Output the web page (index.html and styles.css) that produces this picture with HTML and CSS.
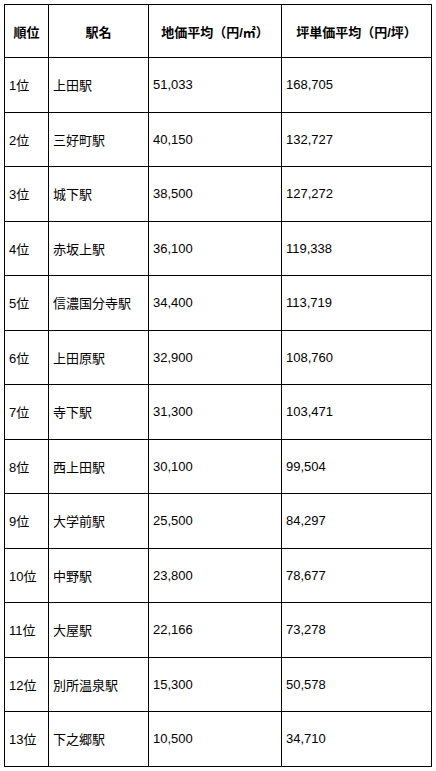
FILE: index.html
```html
<!DOCTYPE html>
<html lang="ja">
<head>
<meta charset="utf-8">
<link rel="stylesheet" href="styles.css">
</head>
<body>
<table class="rank">
  <colgroup>
    <col class="c1"><col class="c2"><col class="c3"><col class="c4">
  </colgroup>
  <thead>
    <tr class="head"><th>順位</th><th>駅名</th><th>地価平均（円/㎡）</th><th>坪単価平均（円/坪）</th></tr>
  </thead>
  <tbody>
    <tr><td>1位</td><td>上田駅</td><td>51,033</td><td>168,705</td></tr>
    <tr><td>2位</td><td>三好町駅</td><td>40,150</td><td>132,727</td></tr>
    <tr><td>3位</td><td>城下駅</td><td>38,500</td><td>127,272</td></tr>
    <tr><td>4位</td><td>赤坂上駅</td><td>36,100</td><td>119,338</td></tr>
    <tr><td>5位</td><td>信濃国分寺駅</td><td>34,400</td><td>113,719</td></tr>
    <tr><td>6位</td><td>上田原駅</td><td>32,900</td><td>108,760</td></tr>
    <tr><td>7位</td><td>寺下駅</td><td>31,300</td><td>103,471</td></tr>
    <tr><td>8位</td><td>西上田駅</td><td>30,100</td><td>99,504</td></tr>
    <tr><td>9位</td><td>大学前駅</td><td>25,500</td><td>84,297</td></tr>
    <tr><td>10位</td><td>中野駅</td><td>23,800</td><td>78,677</td></tr>
    <tr><td>11位</td><td>大屋駅</td><td>22,166</td><td>73,278</td></tr>
    <tr><td>12位</td><td>別所温泉駅</td><td>15,300</td><td>50,578</td></tr>
    <tr><td>13位</td><td>下之郷駅</td><td>10,500</td><td>34,710</td></tr>
  </tbody>
</table>
</body>
</html>
```
FILE: styles.css
```css
html, body {
  margin: 0;
  padding: 0;
  background: #fff;
}
body {
  padding: 4px;
  font-family: "Liberation Sans", "Noto Sans CJK JP", Arial, sans-serif;
  font-size: 13px;
  color: #000;
}
.rank {
  border-collapse: collapse;
  table-layout: fixed;
  width: 427px;
}
.c1 { width: 44px; }
.c2 { width: 100px; }
.c3 { width: 133px; }
.c4 { width: 150px; }
.rank th, .rank td {
  border: 1px solid #000;
  padding: 0 4px;
  vertical-align: middle;
  white-space: nowrap;
}
.rank th {
  font-weight: bold;
  text-align: center;
}
.rank td {
  text-align: left;
}
.head { height: 53px; }
.rank tbody tr { height: 54.5px; }
```
